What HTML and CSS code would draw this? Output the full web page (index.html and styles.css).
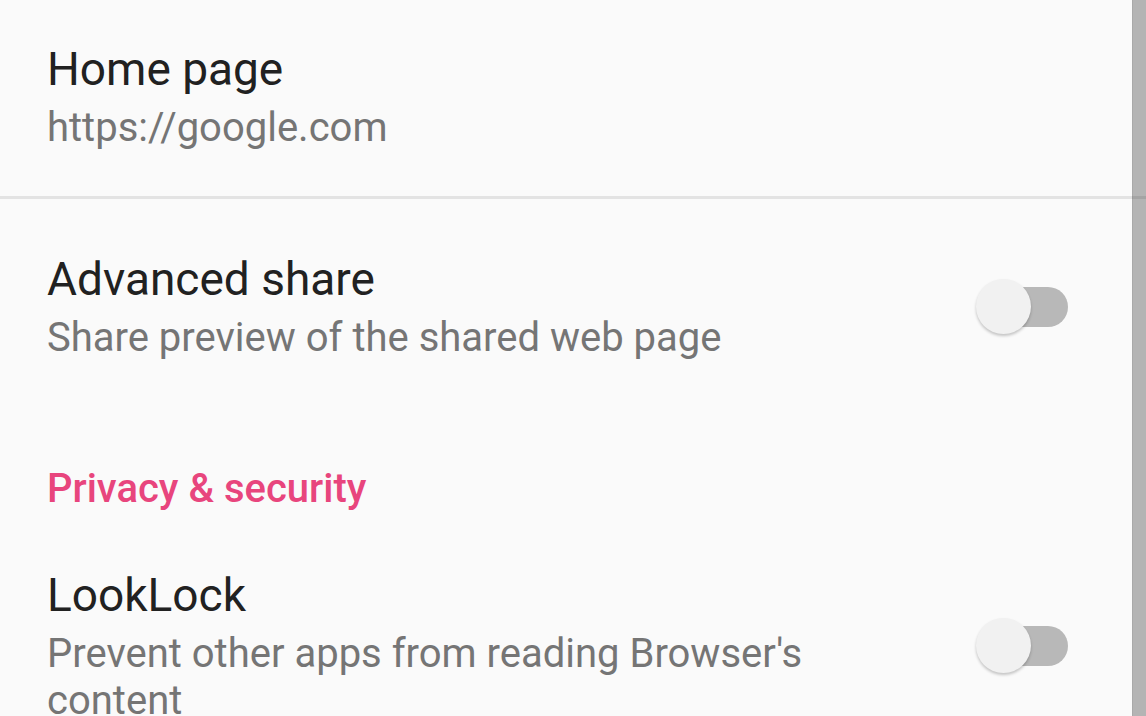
FILE: index.html
```html
<!DOCTYPE html>
<html lang="en">
<head>
    <meta charset="UTF-8">
    <title>Settings</title>
    <link rel="stylesheet" href="styles.css">
</head>
<body>
    <div class="settings">
        <div class="pref pref-first">
            <div class="pref-text">
                <div class="pref-title">Home page</div>
                <div class="pref-summary">https://google.com</div>
            </div>
        </div>

        <div class="divider"></div>

        <div class="pref pref-second">
            <div class="pref-text">
                <div class="pref-title">Advanced share</div>
                <div class="pref-summary">Share preview of the shared web page</div>
            </div>
            <div class="switch">
                <div class="switch-track"></div>
                <div class="switch-thumb"></div>
            </div>
        </div>

        <div class="category">Privacy &amp; security</div>

        <div class="pref pref-third">
            <div class="pref-text">
                <div class="pref-title">LookLock</div>
                <div class="pref-summary">Prevent other apps from reading Browser's content</div>
            </div>
            <div class="switch">
                <div class="switch-track"></div>
                <div class="switch-thumb"></div>
            </div>
        </div>

        <div class="scrollbar"></div>
    </div>
</body>
</html>
```

FILE: styles.css
```css
body {
    margin: 0;
    background: #fafafa;
    font-family: Roboto, "Noto Sans", sans-serif;
    overflow: hidden;
}
.settings {
    position: relative;
    height: 716px;
    overflow: hidden;
}
.pref {
    display: flex;
    align-items: center;
    padding: 0 78px 0 47px;
}
.pref-first {
    padding-top: 42px;
    padding-bottom: 45px;
}
.pref-second {
    padding-top: 53px;
    padding-bottom: 46px;
}
.pref-third {
    padding-top: 56px;
}
.pref-text {
    flex: 1;
    min-width: 0;
    padding-right: 40px;
}
.pref-title {
    font-size: 46px;
    color: #212121;
}
.pref-summary {
    margin-top: 8px;
    font-size: 40px;
    color: #757575;
}
.divider {
    height: 3px;
    background: #e3e3e3;
}
.category {
    padding: 58px 47px 0;
    font-size: 40px;
    font-weight: 500;
    color: #e8457d;
}
.switch {
    position: relative;
    width: 92px;
    height: 56px;
    flex-shrink: 0;
}
.switch-track {
    position: absolute;
    left: 6px;
    right: 0;
    top: 8px;
    height: 40px;
    border-radius: 20px;
    background: #b8b8b8;
}
.switch-thumb {
    position: absolute;
    left: 0;
    top: 0;
    width: 55px;
    height: 55px;
    border-radius: 50%;
    background: #f1f1f1;
    box-shadow: 0 2px 3px rgba(0, 0, 0, 0.22);
}
.scrollbar {
    position: absolute;
    top: 0;
    right: 0;
    bottom: 0;
    width: 13px;
    background: rgba(0, 0, 0, 0.28);
    border-left: 1px solid rgba(0, 0, 0, 0.06);
}
```
